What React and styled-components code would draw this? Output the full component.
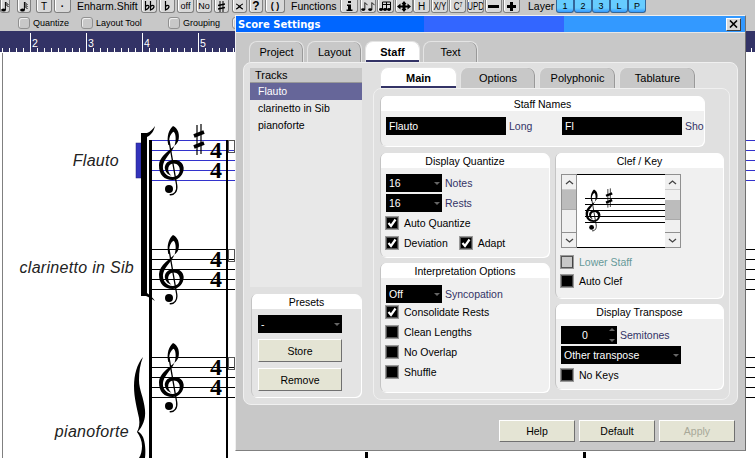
import React from 'react'
import styled, { createGlobalStyle } from 'styled-components'

const Global = createGlobalStyle`
  html, body { margin: 0; padding: 0; background: #fff; }
  body { width: 755px; height: 458px; overflow: hidden; font-family: "Liberation Sans", Arial, sans-serif; font-size: 10.5px; color: #000; }
`

const Page = styled.div`
  position: relative;
  width: 755px;
  height: 458px;
  overflow: hidden;
  display: flex;
  flex-direction: column;
`

// Toolbars
const TopBar = styled.div`
  display: flex;
  align-items: flex-start;
  height: 14px;
  background: #c8c8c8;
`

const ToolButton = styled.div`
  flex: none;
  box-sizing: border-box;
  width: ${p => p.$w}px;
  height: 13px;
  margin-left: ${p => p.$ml || 0}px;
  display: flex;
  align-items: center;
  justify-content: center;
  overflow: hidden;
  background: #d8d8d8;
  border: 1px solid #808080;
  border-top: none;
  border-radius: 0 0 3px 3px;
  box-shadow: inset 1px 0 #fff;
  font-size: ${p => p.$size || 9}px;
  line-height: 11px;
  font-weight: ${p => (p.$bold ? 700 : 400)};
`

const Narrow = styled.span`
  display: inline-block;
  font-size: 11px;
  white-space: nowrap;
  transform: scaleX(0.72);
  sup { font-size: 7px; line-height: 0; vertical-align: 3px; }
`

const LayerButton = styled(ToolButton)`
  background: linear-gradient(#66ccff 0 8px, #3399ff 12px);
  border-color: #336699;
  box-shadow: none;
`

const ToolLabel = styled.span`
  flex: none;
  margin-left: ${p => p.$ml}px;
  width: ${p => p.$w}px;
  font-size: 10.5px;
  line-height: 13px;
`

const OptionBar = styled.div`
  display: flex;
  align-items: center;
  height: 17px;
  padding-left: 18px;
  background: #c8c8c8;
`

const OptionItem = styled.label`
  flex: none;
  width: ${p => p.$w}px;
  display: flex;
  align-items: center;
  gap: 3px;
  font-size: 9px;
`

const OptionBox = styled.span`
  box-sizing: border-box;
  width: 12px;
  height: 12px;
  background: #c8c8c8;
  border: 1px solid #909090;
  border-radius: 3px;
  box-shadow: inset 1px 1px #eee;
`

const Ruler = styled.div`
  flex: none;
  display: flex;
  height: 22px;
  margin-left: -26px;
  width: 840px;
  background:
    linear-gradient(#fff, #fff) left bottom / 100% 1px no-repeat,
    repeating-linear-gradient(to right, #fff 0 1px, transparent 1px 7px) left bottom / 100% 5px no-repeat,
    #333366;
`

const Bar = styled.div`
  flex: none;
  box-sizing: border-box;
  width: 56px;
  height: 20px;
  margin-top: 2px;
  padding: 4px 0 0 1px;
  border-left: 1px solid #fff;
  color: #fff;
  font-size: 10.5px;
  line-height: 12px;
`

const Score = styled.div`
  position: relative;
  flex: 1;
  margin-left: 2px;
  border-left: 1px solid #808080;
`

const ScoreCanvas = styled.svg`
  position: absolute;
  left: -3px;
  top: -53px;
  width: 755px;
  height: 458px;
`

const TrackName = styled.span`
  position: absolute;
  right: ${p => 755 - p.$x}px;
  top: ${p => p.$y - 53}px;
  font-size: 16px;
  line-height: 18px;
  letter-spacing: 0.3px;
  font-style: italic;
  color: #222;
`

// Settings window
const Window = styled.div`
  position: absolute;
  left: 235px;
  top: 15px;
  box-sizing: border-box;
  width: 511px;
  height: 436px;
  background: #c8c8c8;
  border: 1px solid #f0f0f0;
  border-right-color: #707070;
  border-bottom-color: #808080;
  display: flex;
  flex-direction: column;
`

const TitleBar = styled.div`
  flex: none;
  box-sizing: border-box;
  height: 17px;
  display: flex;
  align-items: center;
  justify-content: space-between;
  padding: 0 4px 0 2px;
  border-bottom: 1px solid #e8e8e8;
  background: linear-gradient(to right, #0066ff 0 188px, #3366ff 188px 328px, #3399ff 328px);
  color: #fff;
  font-family: "DejaVu Sans", sans-serif;
  font-weight: 700;
  font-size: 10px;
`

const CloseButton = styled.div`
  width: 15px;
  height: 13px;
  display: flex;
  align-items: center;
  justify-content: center;
  background: #d8d8d8;
  border: 1px solid;
  border-color: #fff #404040 #404040 #fff;
  box-sizing: border-box;
`

const Tabs = styled.div`
  flex: none;
  display: flex;
  gap: ${p => p.$gap}px;
  height: 21px;
  margin-top: ${p => p.$top || 0}px;
  padding-left: ${p => p.$pad}px;
  position: relative;
  z-index: 1;
`

const Tab = styled.div`
  flex: none;
  box-sizing: border-box;
  width: ${p => p.$w}px;
  height: 21px;
  padding-top: 3px;
  text-align: center;
  font-size: 11px;
  line-height: 14px;
  border: 1px solid #e4e4e4;
  border-bottom: none;
  border-radius: 8px 8px 0 0;
  background: ${p => (p.$active ? '#fff' : '#c8c8c8')};
  font-weight: ${p => (p.$active ? 700 : 400)};
  box-shadow: ${p => (p.$active ? 'inset 0 -2px #333366' : 'inset -1px 0 #999')};
`

const MainPanel = styled.div`
  box-sizing: border-box;
  width: 495px;
  height: 343px;
  margin-left: 7px;
  padding: 4px 7px 0 6px;
  display: grid;
  grid-template-columns: 112px 357px;
  column-gap: 11px;
  background: #e0e0e0;
  border: 1px solid #f0f0f0;
  border-radius: 8px;
`

const LeftColumn = styled.div`
  display: flex;
  flex-direction: column;
  margin-top: 1px;
`

const TrackList = styled.div`
  height: 219px;
  background: #e8e8e8;
`

const TrackHead = styled.div`
  box-sizing: border-box;
  height: 15px;
  padding-left: 5px;
  background: #c8c8c8;
  border-bottom: 1px solid #999;
  line-height: 14px;
  font-size: 11px;
`

const TrackRow = styled.div`
  height: 17px;
  padding-left: 8px;
  line-height: 17px;
  background: ${p => (p.$selected ? '#666699' : 'transparent')};
  color: ${p => (p.$selected ? '#fff' : '#000')};
`

const Group = styled.section`
  box-sizing: border-box;
  width: ${p => p.$w}px;
  height: ${p => p.$h}px;
  background: ${p => p.$bg || '#f0f0f0'};
  border-radius: 6px;
  border-left: 1px solid #c4c4c4;
  box-shadow: 1px 1px #fff;
  overflow: hidden;
`

const GroupHead = styled.header`
  height: 15px;
  background: #fff;
  text-align: center;
  line-height: 17px;
`

const Presets = styled(Group)`
  margin: 7px 0 0 1px;
`

const PresetBody = styled.div`
  display: flex;
  flex-direction: column;
  gap: 6px;
  padding: 6px 0 0 6px;
`

const Button = styled.div`
  flex: none;
  box-sizing: border-box;
  width: ${p => p.$w}px;
  height: ${p => p.$h || 23}px;
  display: flex;
  align-items: center;
  justify-content: center;
  background: #e4e4d4;
  border: 1px solid;
  border-color: #fff #707070 #707070 #fff;
  color: ${p => (p.$disabled ? '#a8a898' : '#000')};
`

const RightColumn = styled.div`
  display: flex;
  flex-direction: column;
`

const SubPanel = styled.div`
  box-sizing: border-box;
  height: 312px;
  padding: 7px 0 0 6px;
  background: #e0e0e0;
  border: 1px solid #f0f0f0;
  border-radius: 8px;
`

const Columns = styled.div`
  display: grid;
  grid-template-columns: 169px 168px;
  column-gap: 6px;
  margin-top: 7px;
`

const Stack = styled.div`
  display: flex;
  flex-direction: column;
  gap: 6px;
`

const NamesRow = styled.div`
  display: flex;
  align-items: center;
  padding: 6px 0 0 5px;
  white-space: nowrap;
`

const NameField = styled.div`
  flex: none;
  box-sizing: border-box;
  width: 120px;
  height: 18px;
  padding-left: 3px;
  background: #000;
  color: #fff;
  line-height: 18px;
`

const Hint = styled.span`
  color: ${p => p.$color || '#333366'};
  margin-left: 3px;
  width: ${p => p.$w || 'auto'};
`

const Body = styled.div`
  display: flex;
  flex-direction: column;
  align-items: flex-start;
  padding: ${p => p.$top || 6}px 0 0 5px;
  gap: ${p => p.$gap || 0}px;
`

const Row = styled.div`
  display: flex;
  align-items: center;
`

const Checks = styled.div`
  margin-top: ${p => p.$top || 0}px;
`

const Combo = styled.div`
  flex: none;
  position: relative;
  box-sizing: border-box;
  width: ${p => p.$w}px;
  height: 18px;
  padding-left: 3px;
  background: #000;
  color: #fff;
  line-height: 18px;
  &::after {
    content: '';
    position: absolute;
    right: 2px;
    top: 8px;
    border: 3px solid transparent;
    border-top: 3px solid #666;
  }
`

const Spin = styled.div`
  flex: none;
  position: relative;
  box-sizing: border-box;
  width: 56px;
  height: 18px;
  padding-left: 21px;
  background: #000;
  color: #fff;
  line-height: 18px;
  &::before, &::after {
    content: '';
    position: absolute;
    right: 2px;
    border: 3px solid transparent;
  }
  &::before { top: -1px; border-bottom-color: #666; }
  &::after { bottom: -1px; border-top-color: #666; }
`

const CheckRow = styled.div`
  height: ${p => p.$h || 20}px;
  display: flex;
  align-items: center;
  color: ${p => p.$color || '#000'};
`

const Box = styled.span`
  flex: none;
  box-sizing: border-box;
  width: 12px;
  height: 12px;
  margin-right: 6px;
  margin-left: ${p => p.$ml || 0}px;
  display: flex;
  align-items: center;
  justify-content: center;
  background: ${p => (p.$off ? '#c8c8c8' : '#000')};
  outline: 1px solid #999;
  border: 1px solid #555;
  border-right-color: #444;
`

const KeyRow = styled.div`
  display: flex;
  height: 74px;
`

const Scroller = styled.div`
  box-sizing: border-box;
  flex: none;
  width: 16px;
  display: flex;
  flex-direction: column;
  background: #f0f0f0;
  border: 1px solid #909090;
  border-width: 1px 1px 1px ${p => (p.$left ? 1 : 0)}px;
`

const Track = styled.div`
  flex: 1;
  padding-top: ${p => p.$top}px;
  border-top: 1px solid #ccc;
  border-bottom: 1px solid #909090;
`

const Thumb = styled.div`
  height: 19px;
  background: #bcbcbc;
  border-bottom: 1px solid #aaa;
`

const Arrow = styled.div`
  height: 14px;
  display: flex;
  align-items: center;
  justify-content: center;
`

const KeyView = styled.svg`
  flex: none;
  display: block;
  width: 88px;
  height: 74px;
  background: #fff;
`

const Footer = styled.div`
  display: flex;
  justify-content: flex-end;
  gap: 4px;
  margin-top: 15px;
  padding-right: 10px;
`

// Drawings
const CLEF = 'M130 18C146 25 151 45 146 62C138 84 90 100 88 135C87 165 105 180 128 180C150 180 163 160 162 143C160 125 145 118 130 120C112 122 103 135 106 148C108 158 116 165 125 167C118 160 114 152 116 143C119 132 130 128 140 132C150 137 153 150 148 160C142 172 128 173 116 168C103 161 97 147 101 132C106 112 130 95 136 72C140 55 138 38 131 35C122 42 116 55 120 75L116 75C110 50 118 28 130 18Z'

const Clef = ({ x, y, s = 1 }) => (
  <g transform={`translate(${x} ${y}) scale(${s / 3}) translate(-85 -15)`}>
    <path d={CLEF} fill="#000" />
    <path d="M118 62L141 195C144 213 134 226 120 224" fill="none" stroke="#000" strokeWidth="4" />
    <circle cx="118" cy="207" r="12" fill="#000" />
  </g>
)

const Sharp = ({ x, y, s = 1 }) => (
  <g transform={`translate(${x} ${y}) scale(${s})`}>
    <path d="M3 0V30M7 -1V29" stroke="#000" strokeWidth="1.2" />
    <path d="M0 11L10 7M0 22L10 18" stroke="#000" strokeWidth="3.6" />
  </g>
)

const StaffLines = ({ y, x = 152, to = 755, color = '#000' }) => (
  <g stroke={color} strokeWidth="1">
    {[0, 10, 20, 30, 40].map(d => (
      <line key={d} x1={x} x2={to} y1={y + d + 0.5} y2={y + d + 0.5} />
    ))}
  </g>
)

const TimeSig = ({ y }) => (
  <g fontFamily="'Liberation Serif', serif" fontWeight="700" fontSize="24" fill="#000">
    <text x="210" y={y + 18}>4</text>
    <text x="210" y={y + 38}>4</text>
  </g>
)

const Staves = () => (
  <ScoreCanvas viewBox="0 0 755 458">
    <StaffLines y={140} color="#3333cc" />
    <StaffLines y={249} />
    <StaffLines y={357} />
    <rect x="149" y="140" width="3" height="318" />
    <rect x="226" y="140" width="2" height="318" />
    <rect x="228.5" y="140.5" width="6" height="12" fill="none" stroke="#555" />
    <rect x="228.5" y="249.5" width="6" height="12" fill="none" stroke="#555" />
    <rect x="228.5" y="357.5" width="6" height="12" fill="none" stroke="#555" />
    <rect x="136" y="143" width="5" height="35" fill="#3333bb" stroke="#222277" strokeWidth="0.5" />
    <rect x="141" y="133" width="6" height="162" />
    <path d="M141 133H147C150 132 153 129 155 126C154 131 151 135 147 137H141Z" />
    <path d="M141 293H147C150 295 153 298 155 301C152 299 149 297 146 296H141Z" />
    <path d="M143 357C137 364 134 375 134 386C134 398 137 408 139 418C140 424 139 428 137 432C140 436 142 441 142 446C142 450 141 455 139 458H145C146 450 145 442 143 437C141 433 139 432 138 431.5C142 427 146 420 145 410C144 398 139 390 139 380C139 372 140 364 143 357Z" />
    <Clef x={158} y={125} />
    <Clef x={158} y={234} />
    <Clef x={158} y={342} />
    <Sharp x={194} y={125} />
    <TimeSig y={140} />
    <TimeSig y={249} />
    <TimeSig y={357} />
    <rect x="365" y="452" width="3" height="6" />
    <rect x="583" y="452" width="3" height="6" />
  </ScoreCanvas>
)

const NoteIcon = ({ beams = 1 }) => (
  <svg width="8" height="11" viewBox="0 0 8 11">
    <ellipse cx="2.5" cy="9" rx="2.4" ry="1.6" />
    <path d="M4.4 9V1" stroke="#000" />
    {Array.from({ length: beams }).map((_, i) => (
      <path key={i} d={`M4.5 ${1 + i * 2}L7.5 ${4 + i * 2}`} stroke="#000" />
    ))}
  </svg>
)

const DoubleFlat = () => (
  <svg width="11" height="10" viewBox="0 0 11 10">
    <path d="M1.5 0V9C4 8 5 7 5 5.5C5 4 3 4 1.5 5.5M6.5 0V9C9 8 10 7 10 5.5C10 4 8 4 6.5 5.5" fill="none" stroke="#000" strokeWidth="1.2" />
  </svg>
)

const Flat = () => (
  <svg width="6" height="10" viewBox="0 0 6 10">
    <path d="M1.5 0V9C4 8 5 7 5 5.5C5 4 3 4 1.5 5.5" fill="none" stroke="#000" strokeWidth="1.2" />
  </svg>
)

const SharpIcon = () => (
  <svg width="7" height="11" viewBox="0 0 7 11">
    <path d="M2 0V11M5 0V11" stroke="#000" />
    <path d="M0 4.5L7 3M0 8L7 6.5" stroke="#000" strokeWidth="1.6" />
  </svg>
)

const CrossIcon = () => (
  <svg width="9" height="7" viewBox="0 0 9 7">
    <path d="M1 1C3 1 6 6 8 6M1 6C3 6 6 1 8 1" fill="none" stroke="#000" strokeWidth="1.2" />
  </svg>
)

const InfoIcon = () => (
  <svg width="7" height="10" viewBox="0 0 7 10">
    <path d="M2 0H5V2H2ZM1 3.5H5V8.5H6.5V10H.5V8.5H2V5H1Z" />
  </svg>
)

const NotesIcon = () => (
  <svg width="13" height="10" viewBox="0 0 13 10">
    <ellipse cx="2" cy="8.5" rx="2" ry="1.4" />
    <ellipse cx="10" cy="8.5" rx="2" ry="1.4" />
    <path d="M3.5 8V1H11.5V8M3.5 3.5H11.5M7.5 1V8" fill="none" stroke="#000" />
    <ellipse cx="6" cy="8.5" rx="2" ry="1.4" />
  </svg>
)

const ArrowsIcon = () => (
  <svg width="14" height="11" viewBox="0 0 14 11">
    <path d="M0 5.5L3.5 2.5V8.5ZM14 5.5L10.5 2.5V8.5ZM7 0L4.5 3H9.5ZM7 11L4.5 8H9.5Z" />
    <rect x="5.5" y="2" width="3" height="7" />
    <rect x="3" y="4.5" width="8" height="2" />
  </svg>
)

const MinusIcon = () => (
  <svg width="11" height="3" viewBox="0 0 11 3"><rect width="11" height="3" /></svg>
)

const PlusIcon = () => (
  <svg width="9" height="9" viewBox="0 0 9 9"><path d="M3 0H6V3H9V6H6V9H3V6H0V3H3Z" /></svg>
)

const Chevron = ({ down }) => (
  <svg width="9" height="5" viewBox="0 0 9 5">
    <path d={down ? 'M1 1L4.5 4L8 1' : 'M1 4L4.5 1L8 4'} fill="none" stroke="#444" strokeWidth="1.3" />
  </svg>
)

const Tick = () => (
  <svg width="10" height="10" viewBox="0 0 10 10">
    <path d="M1.5 5L4 8L8.5 1.5" fill="none" stroke="#fff" strokeWidth="2.2" />
  </svg>
)

const Check = ({ on, off, ml }) => <Box $off={off} $ml={ml}>{on && <Tick />}</Box>

const KeyScroll = ({ left, top }) => (
  <Scroller $left={left}>
    <Arrow><Chevron /></Arrow>
    <Track $top={top}><Thumb /></Track>
    <Arrow><Chevron down /></Arrow>
  </Scroller>
)

const App = () => (
  <Page>
    <Global />
    <TopBar>
      <ToolButton $w={10}><NoteIcon beams={2} /></ToolButton>
      <ToolButton $w={14} $ml={7}><NoteIcon beams={3} /></ToolButton>
      <ToolButton $w={16} $ml={5} $size={10}>T</ToolButton>
      <ToolButton $w={17} $ml={2} $bold $size={10}>·</ToolButton>
      <ToolLabel $ml={6} $w={64}>Enharm.Shift</ToolLabel>
      <ToolButton $w={16}><DoubleFlat /></ToolButton>
      <ToolButton $w={16} $ml={2}><Flat /></ToolButton>
      <ToolButton $w={17} $ml={2}>off</ToolButton>
      <ToolButton $w={16} $ml={2}>No</ToolButton>
      <ToolButton $w={15} $ml={2}><SharpIcon /></ToolButton>
      <ToolButton $w={15} $ml={3}><CrossIcon /></ToolButton>
      <ToolButton $w={14} $ml={2} $bold $size={12}>?</ToolButton>
      <ToolButton $w={20} $ml={2} $bold>( )</ToolButton>
      <ToolLabel $ml={6} $w={49}>Functions</ToolLabel>
      <ToolButton $w={18}><InfoIcon /></ToolButton>
      <ToolButton $w={16} $ml={2}><NoteIcon /><NoteIcon /></ToolButton>
      <ToolButton $w={17} $ml={1}><NotesIcon /></ToolButton>
      <ToolButton $w={18} $ml={1}><ArrowsIcon /></ToolButton>
      <ToolButton $w={17} $size={10}>H</ToolButton>
      <ToolButton $w={17} $ml={1}><Narrow>X/Y</Narrow></ToolButton>
      <ToolButton $w={17} $ml={1}><Narrow>C<sup>7</sup></Narrow></ToolButton>
      <ToolButton $w={17} $ml={1}><Narrow>UPD</Narrow></ToolButton>
      <ToolButton $w={17} $ml={1}><MinusIcon /></ToolButton>
      <ToolButton $w={17} $ml={1}><PlusIcon /></ToolButton>
      <ToolLabel $ml={8} $w={28}>Layer</ToolLabel>
      {['1', '2', '3', 'L', 'P'].map(l => (
        <LayerButton key={l} $w={18}>{l}</LayerButton>
      ))}
    </TopBar>
    <OptionBar>
      <OptionItem $w={63}><OptionBox />Quantize</OptionItem>
      <OptionItem $w={87}><OptionBox />Layout Tool</OptionItem>
      <OptionItem $w={64}><OptionBox />Grouping</OptionItem>
      <OptionBox />
    </OptionBar>
    <Ruler>
      {[1, 2, 3, 4, 5, 6, 7, 8, 9, 10, 11, 12, 13, 14, 15].map(n => (
        <Bar key={n}>{n > 1 && n < 6 ? n : ''}</Bar>
      ))}
    </Ruler>
    <Score>
      <Staves />
      <TrackName $x={119} $y={152}>Flauto</TrackName>
      <TrackName $x={134} $y={259}>clarinetto in Sib</TrackName>
      <TrackName $x={129} $y={423}>pianoforte</TrackName>
    </Score>

    <Window>
      <TitleBar>
        Score Settings
        <CloseButton>
          <svg width="9" height="8" viewBox="0 0 9 8">
            <path d="M1 .5L8 7.5M8 .5L1 7.5" stroke="#000" strokeWidth="1.6" />
          </svg>
        </CloseButton>
      </TitleBar>
      <Tabs $pad={13} $gap={3} $top={8}>
        <Tab $w={55}>Project</Tab>
        <Tab $w={55}>Layout</Tab>
        <Tab $w={55} $active>Staff</Tab>
        <Tab $w={55}>Text</Tab>
      </Tabs>
      <MainPanel>
        <LeftColumn>
          <TrackList>
            <TrackHead>Tracks</TrackHead>
            <TrackRow $selected>Flauto</TrackRow>
            <TrackRow>clarinetto in Sib</TrackRow>
            <TrackRow>pianoforte</TrackRow>
          </TrackList>
          <Presets $w={110} $h={103} $bg="#e4e4e4">
            <GroupHead>Presets</GroupHead>
            <PresetBody>
              <Combo $w={84}>-</Combo>
              <Button $w={84}>Store</Button>
              <Button $w={84}>Remove</Button>
            </PresetBody>
          </Presets>
        </LeftColumn>
        <RightColumn>
          <Tabs $pad={7} $gap={3}>
            <Tab $w={77} $active>Main</Tab>
            <Tab $w={76}>Options</Tab>
            <Tab $w={77}>Polyphonic</Tab>
            <Tab $w={77}>Tablature</Tab>
          </Tabs>
          <SubPanel>
            <Group $w={324} $h={50}>
              <GroupHead>Staff Names</GroupHead>
              <NamesRow>
                <NameField>Flauto</NameField>
                <Hint $w="53px">Long</Hint>
                <NameField>Fl</NameField>
                <Hint>Sho</Hint>
              </NamesRow>
            </Group>
            <Columns>
              <Stack>
                <Group $w={169} $h={104}>
                  <GroupHead>Display Quantize</GroupHead>
                  <Body $gap={2}>
                    <Row><Combo $w={56}>16</Combo><Hint>Notes</Hint></Row>
                    <Row><Combo $w={56}>16</Combo><Hint>Rests</Hint></Row>
                    <Checks $top={-1}>
                      <CheckRow><Check on />Auto Quantize</CheckRow>
                      <CheckRow><Check on />Deviation<Check on ml={12} />Adapt</CheckRow>
                    </Checks>
                  </Body>
                </Group>
                <Group $w={169} $h={129}>
                  <GroupHead>Interpretation Options</GroupHead>
                  <Body $top={7}>
                    <Row><Combo $w={56}>Off</Combo><Hint>Syncopation</Hint></Row>
                    <Checks $top={-1}>
                      <CheckRow><Check on />Consolidate Rests</CheckRow>
                      <CheckRow><Check />Clean Lengths</CheckRow>
                      <CheckRow><Check />No Overlap</CheckRow>
                      <CheckRow><Check />Shuffle</CheckRow>
                    </Checks>
                  </Body>
                </Group>
              </Stack>
              <Stack>
                <Group $w={168} $h={145}>
                  <GroupHead>Clef / Key</GroupHead>
                  <Body $gap={4}>
                    <KeyRow>
                      <KeyScroll left top={0} />
                      <KeyView viewBox="0 0 88 74">
                        <path d="M0 .5H88M0 73.5H88" stroke="#000" />
                        <g stroke="#000">
                          {[24, 30, 36, 42, 48].map(y => (
                            <line key={y} x1="8" x2="88" y1={y + 0.5} y2={y + 0.5} />
                          ))}
                        </g>
                        <Clef x={8} y={15} s={0.6} />
                        <Sharp x={29} y={15} s={0.62} />
                      </KeyView>
                      <KeyScroll top={10} />
                    </KeyRow>
                    <div>
                      <CheckRow $h={19} $color="#669999"><Check off />Lower Staff</CheckRow>
                      <CheckRow $h={19}><Check />Auto Clef</CheckRow>
                    </div>
                  </Body>
                </Group>
                <Group $w={168} $h={85}>
                  <GroupHead>Display Transpose</GroupHead>
                  <Body $top={7} $gap={2}>
                    <Row><Spin>0</Spin><Hint>Semitones</Hint></Row>
                    <Combo $w={120}>Other transpose</Combo>
                    <CheckRow $h={18}><Check />No Keys</CheckRow>
                  </Body>
                </Group>
              </Stack>
            </Columns>
          </SubPanel>
        </RightColumn>
      </MainPanel>
      <Footer>
        <Button $w={76} $h={22}>Help</Button>
        <Button $w={76} $h={22}>Default</Button>
        <Button $w={76} $h={22} $disabled>Apply</Button>
      </Footer>
    </Window>
  </Page>
)

export default App
